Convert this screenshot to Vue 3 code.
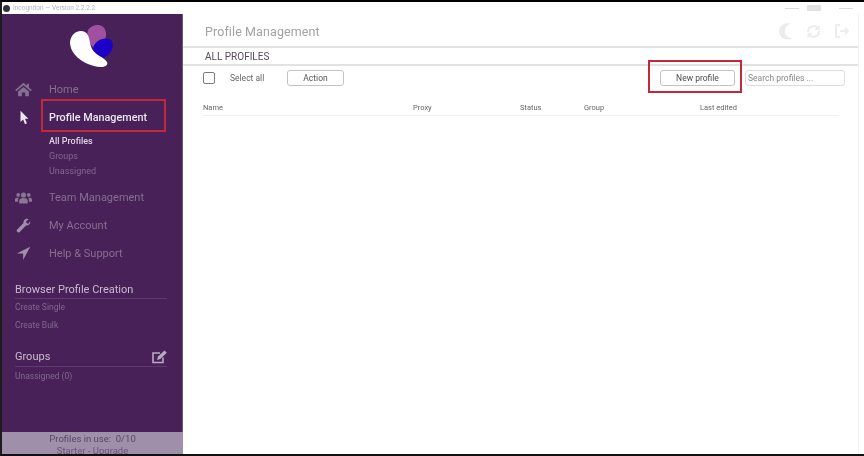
<script setup>
const columns = [
  { label: 'Name', width: 210 },
  { label: 'Proxy', width: 107 },
  { label: 'Status', width: 64 },
  { label: 'Group', width: 116 },
  { label: 'Last edited', width: 100 }
]
</script>

<template>
  <div class="frame">
    <div class="titlebar">
      <span class="app-dot"></span>
      <span class="app-title">Incogniton — Version 2.2.2.2</span>
      <div class="win-controls">
        <span class="wc wc-line"></span>
        <span class="wc wc-box"></span>
        <span class="wc wc-line wc-last"></span>
      </div>
    </div>
    <div class="body">
      <aside class="sidebar">
        <div class="logo">
          <svg width="48" height="48" viewBox="0 0 48 48">
            <path d="M19 8C24 1 36 1 37 11C38 17 33 24 27 28C20 22 17 14 19 8Z" fill="#a14f9f"/>
            <path d="M24 26C26 18 36 14 42 18C46 22 43 32 36 35C31 37 27 34 24 26Z" fill="#1a00c8"/>
            <path d="M1 20C2 10 11 7 16 10C21 13 20 20 23 27C26 33 35 35 38 40C40 45 32 46 25 44C13 41 1 32 1 20Z" fill="#fff"/>
          </svg>
        </div>

        <nav class="nav">
          <div class="nav-row">
            <svg class="nav-icon" viewBox="0 0 20 18"><path d="M10 1L0 9.5L1.3 11L10 4L18.7 11L20 9.5L16.5 6.5V2H14V4.4ZM3.5 11.5V17H8V12.5H12V17H16.5V11.5L10 6Z" fill="#84708f"/></svg>
            <span class="nav-label">Home</span>
          </div>
          <div class="nav-row active">
            <svg class="nav-icon" viewBox="0 0 20 20"><path d="M6 1V16L9.5 12.8L12 19L14.6 17.8L12 11.8H16.5Z" fill="#ece6ef"/></svg>
            <span class="nav-label">Profile Management</span>
          </div>
          <ul class="subnav">
            <li class="current">All Profiles</li>
            <li>Groups</li>
            <li>Unassigned</li>
          </ul>
          <div class="nav-row team">
            <svg class="nav-icon" viewBox="0 0 20 16"><g fill="#8a7695"><circle cx="10" cy="5" r="3"/><circle cx="3.8" cy="5" r="2.2"/><circle cx="16.2" cy="5" r="2.2"/><path d="M5 15V11.5C5 9.5 7 8.5 10 8.5C13 8.5 15 9.5 15 11.5V15Z"/><path d="M0 13V10C0 8.7 1.5 8 4.5 8.2C3.8 9 3.6 10 3.6 13Z"/><path d="M20 13V10C20 8.7 18.5 8 15.5 8.2C16.2 9 16.4 10 16.4 13Z"/></g></svg>
            <span class="nav-label">Team Management</span>
          </div>
          <div class="nav-row">
            <svg class="nav-icon" viewBox="0 0 20 20"><path d="M19 5.2C19 8.2 16.3 10.5 13.3 10L5 18.5C4 19.5 2.3 19.3 1.6 18.4C0.7 17.5 0.7 16.1 1.6 15.2L10 6.8C9.4 3.6 12 1 15 1C15.7 1 16.3 1.1 16.9 1.4L13.5 4.6L14.2 6.9L16.5 7.5L19 4Z" fill="#a28eae"/></svg>
            <span class="nav-label">My Account</span>
          </div>
          <div class="nav-row">
            <svg class="nav-icon" viewBox="0 0 20 20"><path d="M19 1L1 10H9.5V18.5Z" fill="#a28eae"/></svg>
            <span class="nav-label">Help &amp; Support</span>
          </div>
        </nav>

        <section class="panel creation">
          <h3 class="panel-title">Browser Profile Creation</h3>
          <a class="panel-link">Create Single</a>
          <a class="panel-link">Create Bulk</a>
        </section>

        <section class="panel groups">
          <h3 class="panel-title with-icon">
            Groups
            <svg width="15" height="14" viewBox="0 0 15 14"><path d="M11 7.5V12.5H1V3H8" fill="none" stroke="#b7a9c1" stroke-width="1.6"/><path d="M5 10L6 6.5L12.5 0.5L14.8 2.8L8.3 9Z" fill="#b7a9c1"/></svg>
          </h3>
          <a class="panel-link">Unassigned (0)</a>
        </section>

        <footer class="usage">
          <div>Profiles in use:&nbsp; 0/10</div>
          <div class="plan">Starter - Upgrade</div>
        </footer>
      </aside>

      <main class="main">
        <header class="topbar">
          <h1>Profile Management</h1>
          <div class="top-icons">
            <svg width="16" height="18" viewBox="0 0 16 18"><path d="M11 1C6 1 2 4.8 2 9.5C2 14 6 17.5 11 17.5C12.6 17.5 14 17 15 16.4C10.8 16 8 13.2 8 9.3C8 5.8 10.2 3 13.5 1.6C12.8 1.2 12 1 11 1Z" fill="#ececec"/></svg>
            <svg width="15" height="15" viewBox="0 0 15 15"><path d="M2 8A5.5 5.5 0 0 1 12 4.5M13 7A5.5 5.5 0 0 1 3 10.5" fill="none" stroke="#ececec" stroke-width="2"/><path d="M13.5 1V6H8.5ZM1.5 14V9H6.5Z" fill="#ececec"/></svg>
            <svg width="16" height="14" viewBox="0 0 16 14"><path d="M6 1H2V13H6M6 7H14M11 4L14 7L11 10" fill="none" stroke="#ededed" stroke-width="2"/></svg>
          </div>
        </header>
        <div class="section-title">ALL PROFILES</div>
        <div class="toolbar">
          <label class="select-all"><span class="checkbox"></span>Select all</label>
          <button class="btn action">Action</button>
          <span class="spacer"></span>
          <button class="btn new">New profile</button>
          <div class="search">Search profiles ...</div>
        </div>
        <div class="table-head">
          <span v-for="c in columns" :key="c.label" :style="{ width: c.width + 'px' }">{{ c.label }}</span>
        </div>
      </main>
    </div>
    <div class="callout callout-nav"></div>
    <div class="callout callout-new"></div>
  </div>
</template>

<style>
html, body { margin: 0; background: #fff; }
</style>

<style scoped>
.frame {
  position: relative;
  width: 864px;
  height: 456px;
  box-sizing: border-box;
  border-top: 2px solid #000;
  border-left: 2px solid #1c1c1c;
  border-bottom: 2px solid #111;
  display: flex;
  flex-direction: column;
  overflow: hidden;
  background: #fff;
  font-family: "Roboto", "Liberation Sans", sans-serif;
  filter: blur(0.55px);
}
.titlebar {
  height: 12px;
  flex: none;
  display: flex;
  align-items: center;
  gap: 3px;
  padding-left: 1px;
  padding-right: 11px;
  font-size: 6.5px;
  color: #b5b5b5;
}
.app-dot {
  width: 7px;
  height: 7px;
  border-radius: 50%;
  background: #34303a;
}
.win-controls {
  margin-left: auto;
  display: flex;
  align-items: center;
  gap: 8px;
}
.wc { width: 14px; background: #dcdcdc; }
.wc-line { height: 1px; }
.wc-last { margin-left: 10px; }
.wc-box { height: 6px; background: #e2e2e2; }
.body { flex: 1; display: flex; min-height: 0; }
.sidebar {
  width: 181px;
  flex: none;
  background: #482158;
  display: flex;
  flex-direction: column;
  border-right: 1px solid #6b5a74;
  box-sizing: border-box;
  color: #8f7a9b;
}
.logo {
  height: 56px;
  padding-top: 8px;
  padding-left: 2px;
  display: flex;
  justify-content: center;
  flex: none;
}
.nav { margin-top: -3px; padding-left: 13px; }
.nav-row {
  height: 28px;
  display: flex;
  align-items: center;
  font-size: 11px;
  color: #84708f;
}
.nav-icon { width: 17px; height: 15px; flex: none; margin-right: 17px; }
.active { color: #ece6ef; font-weight: 500; font-size: 10.8px; }
.nav-label { white-space: nowrap; }
.subnav {
  list-style: none;
  margin: 0;
  padding: 3px 0 0 34px;
  font-size: 9px;
  line-height: 15px;
  color: #7e6a8c;
}
.current { color: #ded6e3; font-weight: 500; }
.team { margin-top: 4px; }
.panel { padding: 0 15px 0 13px; display: flex; flex-direction: column; }
.creation { margin-top: 16px; }
.groups { margin-top: 16px; }
.groups .panel-link { margin-top: 1px; }
.panel-title {
  margin: 0 0 -1px;
  font-size: 11px;
  font-weight: 400;
  line-height: 14px;
  padding-bottom: 1px;
  color: #c7bbcf;
  border-bottom: 1px solid #613a72;
}
.with-icon { display: flex; justify-content: space-between; align-items: flex-end; padding-bottom: 2px; }
.panel-link {
  font-size: 8.5px;
  line-height: 18px;
  color: #7e6a8c;
}
.usage {
  margin-top: auto;
  height: 22px;
  background: #a08fa9;
  color: #5a4568;
  font-size: 9.5px;
  line-height: 12px;
  text-align: center;
  padding-top: 1px;
  box-sizing: border-box;
  overflow: hidden;
  margin-right: -1px;
}
.plan { color: #6a5478; }
.main {
  flex: 1;
  min-width: 0;
  display: flex;
  flex-direction: column;
  margin-right: 5px;
  border-right: 1px solid #f2f2f2;
}
.topbar {
  height: 34px;
  flex: none;
  box-sizing: border-box;
  display: flex;
  align-items: center;
  justify-content: space-between;
  padding: 2px 8px 0 22px;
  border-bottom: 2px solid #e2e2e2;
}
.topbar h1 {
  margin: 0;
  font-size: 12.5px;
  font-weight: 400;
  letter-spacing: 0.1px;
  color: #a3a3a3;
}
.top-icons { display: flex; gap: 13px; align-items: center; }
.section-title {
  height: 18px;
  flex: none;
  box-sizing: border-box;
  padding: 2px 0 0 22px;
  font-size: 10px;
  line-height: 14px;
  color: #55485f;
  border-bottom: 2px solid #e2e2e2;
}
.toolbar {
  height: 23px;
  flex: none;
  display: flex;
  align-items: center;
  padding: 0 13px 3px 20px;
  font-size: 8.5px;
  color: #666;
}
.select-all { display: flex; align-items: center; width: 84px; }
.checkbox {
  width: 10px;
  height: 10px;
  border: 1px solid #7b7b7b;
  border-radius: 2px;
  margin-right: 15px;
}
.btn {
  font: inherit;
  height: 16px;
  padding: 0;
  background: #fff;
  color: #555;
  border: 1px solid #c3c3c3;
  border-radius: 3px;
}
.action { width: 57px; }
.spacer { flex: 1; }
.new { width: 75px; color: #4c4c4c; }
.search {
  width: 100px;
  height: 16px;
  box-sizing: border-box;
  margin-left: 10px;
  padding-left: 2px;
  border: 1px solid #dcdcdc;
  border-radius: 3px;
  line-height: 14px;
  color: #888;
}
.table-head {
  margin: 10px 19px 0 20px;
  padding-bottom: 2px;
  display: flex;
  font-size: 7.5px;
  line-height: 11px;
  color: #666;
  border-bottom: 1px solid #f0f0f0;
}
.callout {
  position: absolute;
  box-sizing: border-box;
  border: 2px solid #c2283a;
  pointer-events: none;
}
.callout-nav { left: 39px; top: 97px; width: 125px; height: 33px; }
.callout-new { left: 646px; top: 58px; width: 94px; height: 33px; }
</style>
